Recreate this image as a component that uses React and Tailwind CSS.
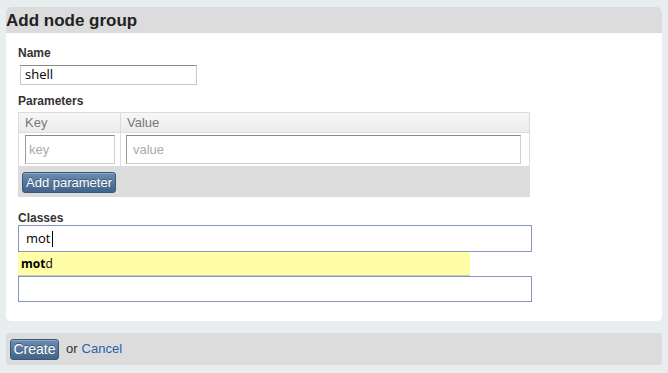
import React from 'react';

const sans = { fontFamily: '"Liberation Sans", Arial, sans-serif' };

const Label = ({ children, className = '' }) => (
  <div className={`text-[12px] leading-[14px] font-bold text-[#333] ${className}`}>{children}</div>
);

const BlueButton = ({ children, className = '' }) => (
  <button
    className={`rounded-[3px] border border-[#3b5676] bg-gradient-to-b from-[#6a8cb3] to-[#42648b] text-white text-[13px] leading-none [text-shadow:0_-1px_0_rgba(0,0,0,0.35)] shadow-[inset_0_1px_0_rgba(255,255,255,0.25)] ${className}`}
  >
    {children}
  </button>
);

export default function App() {
  return (
    <div className="w-[668px] h-[373px] bg-[#e8edf0] pt-[7px] px-[6px] overflow-hidden" style={sans}>
      {/* Main panel */}
      <div className="rounded-[5px] overflow-hidden bg-white h-[314px] flex flex-col">
        <div className="h-[26px] bg-[#dcdcdc] flex items-center">
          <h1 className="text-[17px] font-bold text-[#222] leading-none">Add node group</h1>
        </div>

        <div className="pl-[12px] pt-[13px]">
          <Label>Name</Label>
          <div className="mt-[5px] ml-[2px] w-[177px] h-[20px] border border-[#c8c8c8] border-t-[#8a8a8a] flex items-center pl-[4px] text-[13px] text-black" style={{ fontFamily: '"Open Sans", sans-serif' }}>
            shell
          </div>

          <Label className="mt-[9px]">Parameters</Label>

          {/* Parameter table */}
          <div className="mt-[4px] w-[512px] border border-[#dcdcdc]">
            <div className="h-[20px] flex bg-gradient-to-b from-[#f7f7f7] to-[#ececec] border-b border-[#dcdcdc] text-[13px] text-[#777]">
              <div className="w-[102px] border-r border-[#dcdcdc] pl-[6px] flex items-center">Key</div>
              <div className="flex-1 pl-[6px] flex items-center">Value</div>
            </div>
            <div className="h-[33px] flex">
              <div className="w-[102px] border-r border-[#dcdcdc] pl-[6px] pt-[2px]">
                <div className="w-[90px] h-[29px] border border-[#cfcfcf] border-t-[#8a8a8a] border-l-[#9a9a9a] pl-[3px] flex items-center text-[13px] text-[#aaa]">key</div>
              </div>
              <div className="flex-1 pl-[5px] pt-[2px]">
                <div className="w-[395px] h-[29px] border border-[#cfcfcf] border-t-[#8a8a8a] border-l-[#9a9a9a] pl-[6px] flex items-center text-[13px] text-[#aaa]">value</div>
              </div>
            </div>
            <div className="h-[30px] bg-[#dcdcdc] pl-[3px] pt-[4px]">
              <BlueButton className="w-[94px] h-[21px]">Add parameter</BlueButton>
            </div>
          </div>

          <Label className="mt-[14px]">Classes</Label>
          <div className="w-[514px] h-[27px] border border-[#8797b9] flex items-center pl-[7px] text-[13px] text-black" style={{ fontFamily: '"Open Sans", sans-serif' }}>
            mot<span className="inline-block w-px h-[16px] bg-black ml-[1px]" />
          </div>
          <div className="w-[452px] h-[24px] bg-[#fffda6] border-b border-[#c9c9c9] flex items-center pl-[3px] text-[12px] text-black" style={{ fontFamily: '"Open Sans", sans-serif' }}>
            <b>mot</b>d
          </div>
          <div className="w-[514px] h-[26px] border border-[#8797b9]" />
        </div>
      </div>

      {/* Footer */}
      <div className="mt-[12px] h-[32px] bg-[#dcdcdc] rounded-[3px] flex items-center pl-[4px] text-[13px]">
        <BlueButton className="w-[49px] h-[21px] text-[14px]">Create</BlueButton>
        <span className="ml-[7px] text-[#333]">or</span>
        <span className="ml-[4px] text-[#2a5fac]">Cancel</span>
      </div>
    </div>
  );
}
